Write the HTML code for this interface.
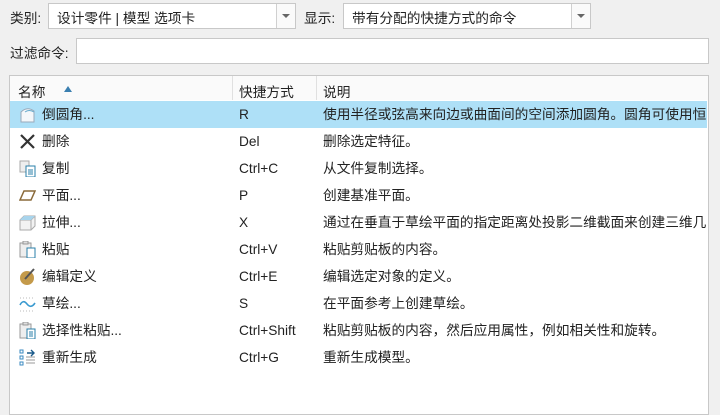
<!DOCTYPE html><html><head><meta charset="utf-8"><style>
body{margin:0;width:720px;height:400px;background:#f0f0f0;font-family:"Liberation Sans","Noto Sans CJK SC",sans-serif;font-size:13.7px;color:#222;position:relative;overflow:hidden}
.a{position:absolute;white-space:nowrap}
.box{position:absolute;background:#fff;border:1px solid #c8c8c8;box-sizing:border-box}
.btn{position:absolute;top:0;bottom:0;right:0;width:18px;border-left:1px solid #d0d0d0;background:#fafafa}
.btn:after{content:"";position:absolute;left:5px;top:10px;border:4px solid transparent;border-top:4px solid #666;border-bottom:0}
.row{position:absolute;left:11px;width:696px;height:27px}
.row span{position:absolute;top:0;line-height:28px;white-space:nowrap}
.ic{position:absolute;left:8px;top:5px;width:17px;height:17px}
</style></head><body>
<div class="a" style="left:10px;top:7px">类别:</div>
<div class="box" style="left:48px;top:3px;width:248px;height:26px"><span class="a" style="left:8px;top:3px">设计零件 | 模型 选项卡</span><div class="btn"></div></div>
<div class="a" style="left:304px;top:7px">显示:</div>
<div class="box" style="left:343px;top:3px;width:248px;height:26px"><span class="a" style="left:8px;top:3px">带有分配的快捷方式的命令</span><div class="btn"></div></div>
<div class="a" style="left:10px;top:42px">过滤命令:</div>
<div class="box" style="left:76px;top:38px;width:633px;height:26px"></div>
<div class="box" style="left:9px;top:75px;width:700px;height:340px"></div>
<div class="a" style="left:10px;top:76px;width:698px;height:24px;background:#fafafa"></div>
<div class="a" style="left:232px;top:76px;width:1px;height:24px;background:#e0e0e0"></div>
<div class="a" style="left:316px;top:76px;width:1px;height:24px;background:#e0e0e0"></div>
<div class="a" style="left:18px;top:81px">名称</div>
<div class="a" style="left:64px;top:86px;border:4px solid transparent;border-bottom:6px solid #3a7fb0;border-top:0"></div>
<div class="a" style="left:239px;top:81px">快捷方式</div>
<div class="a" style="left:323px;top:81px">说明</div>
<div class="a" style="left:10px;top:101px;width:697px;height:27px;background:#aee0f7"></div>
<div style="position:absolute;left:0;top:101px;width:707px;height:300px;overflow:hidden">
<div class="row" style="top:0"><svg class="ic"><path d="M2 6 Q8 0 15 5 L15 16 L2 16Z" fill="#f4f7fa" stroke="#9ab"/><path d="M6 6 Q10 3 15 6" stroke="#6ac" fill="none"/></svg><span style="left:31px">倒圆角...</span><span style="left:228px">R</span><span style="left:312px">使用半径或弦高来向边或曲面间的空间添加圆角。圆角可使用恒</span></div>
<div class="row" style="top:27px"><svg class="ic"><path d="M2 2L15 15M15 2L2 15" stroke="#333" stroke-width="2.2"/></svg><span style="left:31px">删除</span><span style="left:228px">Del</span><span style="left:312px">删除选定特征。</span></div>
<div class="row" style="top:54px"><svg class="ic"><rect x="1" y="1" width="9" height="11" fill="#eee" stroke="#aaa"/><rect x="7" y="6" width="9" height="11" fill="#fff" stroke="#2a7fa8"/><path d="M9 10h5M9 12h5M9 14h5" stroke="#2a7fa8"/></svg><span style="left:31px">复制</span><span style="left:228px">Ctrl+C</span><span style="left:312px">从文件复制选择。</span></div>
<div class="row" style="top:81px"><svg class="ic"><path d="M5 4H16L12 13H1Z" fill="none" stroke="#8a6a3a" stroke-width="1.5"/></svg><span style="left:31px">平面...</span><span style="left:228px">P</span><span style="left:312px">创建基准平面。</span></div>
<div class="row" style="top:108px"><svg class="ic"><path d="M1 6L5 2H16V12L12 16H1Z" fill="#f2f2f2" stroke="#aaa"/><path d="M1 6H12L16 2M12 6V16" stroke="#aaa" fill="none"/><path d="M1 6L5 2H16L12 6Z" fill="#a8d4ec"/></svg><span style="left:31px">拉伸...</span><span style="left:228px">X</span><span style="left:312px">通过在垂直于草绘平面的指定距离处投影二维截面来创建三维几</span></div>
<div class="row" style="top:135px"><svg class="ic"><rect x="1" y="2" width="11" height="14" fill="#eee" stroke="#999"/><rect x="4" y="0" width="5" height="3" fill="#ddd" stroke="#999"/><rect x="8" y="7" width="8" height="10" fill="#fff" stroke="#2a7fa8"/></svg><span style="left:31px">粘贴</span><span style="left:228px">Ctrl+V</span><span style="left:312px">粘贴剪贴板的内容。</span></div>
<div class="row" style="top:162px"><svg class="ic"><circle cx="8" cy="10" r="7" fill="#c49a4a"/><path d="M6 11L15 1" stroke="#555" stroke-width="2"/></svg><span style="left:31px">编辑定义</span><span style="left:228px">Ctrl+E</span><span style="left:312px">编辑选定对象的定义。</span></div>
<div class="row" style="top:189px"><svg class="ic"><path d="M1 10Q4 4 8 9T16 8" stroke="#3a9ad0" stroke-width="1.6" fill="none"/><path d="M1 3h15M1 16h15" stroke="#bbb" stroke-dasharray="1 2"/></svg><span style="left:31px">草绘...</span><span style="left:228px">S</span><span style="left:312px">在平面参考上创建草绘。</span></div>
<div class="row" style="top:216px"><svg class="ic"><rect x="1" y="2" width="11" height="14" fill="#eee" stroke="#999"/><rect x="4" y="0" width="5" height="3" fill="#ddd" stroke="#999"/><rect x="8" y="7" width="8" height="10" fill="#fff" stroke="#2a7fa8"/><path d="M10 10h4M10 12h4M10 14h4" stroke="#2a7fa8"/></svg><span style="left:31px">选择性粘贴...</span><span style="left:228px">Ctrl+Shift</span><span style="left:312px">粘贴剪贴板的内容，然后应用属性，例如相关性和旋转。</span></div>
<div class="row" style="top:243px"><svg class="ic"><rect x="1" y="1" width="3" height="3" fill="none" stroke="#3a8ac0"/><rect x="1" y="7" width="3" height="3" fill="none" stroke="#3a8ac0"/><rect x="1" y="13" width="3" height="3" fill="none" stroke="#3a8ac0"/><path d="M7 8h9M7 11h9M7 14h9" stroke="#999"/><path d="M8 4h7M12 1l3 3-3 3" stroke="#1a5a8a" fill="none" stroke-width="1.4"/></svg><span style="left:31px">重新生成</span><span style="left:228px">Ctrl+G</span><span style="left:312px">重新生成模型。</span></div>
</div>
</body></html>
